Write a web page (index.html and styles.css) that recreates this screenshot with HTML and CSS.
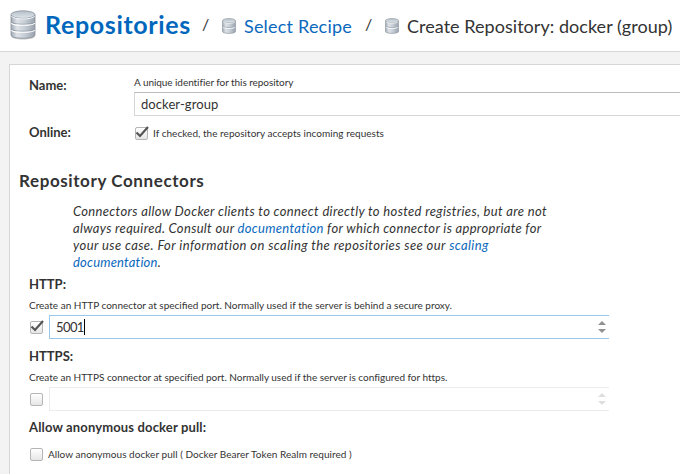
FILE: index.html
```
<!DOCTYPE html>
<html lang="en">
<head>
<meta charset="utf-8">
<title>Create Repository</title>
<link rel="stylesheet" href="styles.css">
</head>
<body>
<svg class="defs" aria-hidden="true">
  <defs>
    <linearGradient id="metal"><stop offset="0" stop-color="#a0a8b2"/><stop offset=".25" stop-color="#dfe3e8"/><stop offset=".55" stop-color="#c8cfd7"/><stop offset="1" stop-color="#98a2ad"/></linearGradient>
    <linearGradient id="lid" x2="0" y2="1"><stop offset="0" stop-color="#b3bdc6"/><stop offset="1" stop-color="#e1e7ec"/></linearGradient>
    <symbol id="database" viewBox="0 0 26 30">
      <path d="M1.500 25v1.500c0 4 23 4 23 0V25z" fill="#555" opacity=".35"/>
      <path d="M1 5v20c0 4.300 24 4.300 24 0V5z" fill="url(#metal)" stroke="#88919b" stroke-width=".8"/>
      <path d="M1.500 12c0 3 23 3 23 0M1.500 19c0 3 23 3 23 0" fill="none" stroke="#8a95a1" stroke-width=".8"/>
      <path d="M1.500 13c0 3 23 3 23 0M1.500 20c0 3 23 3 23 0" fill="none" stroke="#fff" stroke-width="1.200"/>
      <ellipse cx="13" cy="4.600" rx="12" ry="3.800" fill="url(#lid)" stroke="#8c96a0" stroke-width=".8"/>
      <path d="M1.500 6c1 4 22 4 23 0" fill="none" stroke="#f6f8fa" stroke-width="1"/>
    </symbol>
    <symbol id="database-small" viewBox="0 0 14 16">
      <path d="M.5 3v10.500c0 2.500 13 2.500 13 0V3z" fill="url(#metal)" stroke="#99a1aa" stroke-width=".8"/>
      <path d="M1 8c0 2 12 2 12 0" fill="none" stroke="#a0a8b1" stroke-width=".8"/>
      <path d="M1 9c0 2 12 2 12 0" fill="none" stroke="#f8f9fa" stroke-width=".9"/>
      <ellipse cx="7" cy="2.700" rx="6.500" ry="2.200" fill="url(#lid)" stroke="#a0a8b0" stroke-width=".8"/>
      <path d="M1 3.700c1 2.200 11 2.200 12 0" fill="none" stroke="#f8f9fa" stroke-width=".7"/>
    </symbol>
  </defs>
</svg>
<header class="crumbs">
  <svg class="db-large"><use href="#database"/></svg>
  <a class="title">Repositories</a>
  <span class="slash">/</span>
  <svg class="db-small"><use href="#database-small"/></svg>
  <a class="crumb link recipe">Select Recipe</a>
  <span class="slash">/</span>
  <svg class="db-small"><use href="#database-small"/></svg>
  <span class="crumb">Create Repository: docker (group)</span>
</header>
<main class="panel">
  <div class="field name-field">
    <label class="label">Name:</label>
    <div>
      <div class="help name-help">A unique identifier for this repository</div>
      <div class="input name-input"><span>docker-group</span></div>
    </div>
  </div>
  <div class="field online-field">
    <label class="label">Online:</label>
    <div class="check-row">
      <span class="checkbox"><svg class="tick" viewBox="0 0 15 14"><path d="M1.500 6.500 5 10 13 1"/></svg></span>
      <span class="help online-help">If checked, the repository accepts incoming requests</span>
    </div>
  </div>
  <h2 class="section">Repository Connectors</h2>
  <p class="info">
    <span class="line line-first">Connectors allow Docker clients to connect directly to hosted registries, but are not</span>
    <span class="line line-second">always required. Consult our <a class="link">documentation</a> for which connector is appropriate for</span>
    <span class="line line-third">your use case. For information on scaling the repositories see our <a class="link">scaling</a></span>
    <span class="line line-last"><a class="link">documentation</a>.</span>
  </p>
  <section class="connector">
    <div class="label">HTTP:</div>
    <div class="help">Create an HTTP connector at specified port. Normally used if the server is behind a secure proxy.</div>
    <div class="port-row">
      <span class="checkbox"><svg class="tick" viewBox="0 0 15 14"><path d="M1.500 6.500 5 10 13 1"/></svg></span>
      <div class="input port focused"><span class="port-value">5001</span><i class="caret"></i><svg class="spinner" viewBox="0 0 8 12"><path d="M0 4 4 0l4 4zM0 8l4 4 4-4z"/></svg></div>
    </div>
  </section>
  <section class="connector">
    <div class="label">HTTPS:</div>
    <div class="help https-help">Create an HTTPS connector at specified port. Normally used if the server is configured for https.</div>
    <div class="port-row">
      <span class="checkbox"></span>
      <div class="input port disabled"><svg class="spinner" viewBox="0 0 8 12"><path d="M0 4 4 0l4 4zM0 8l4 4 4-4z"/></svg></div>
    </div>
  </section>
  <section class="anonymous">
    <div class="label anonymous-label">Allow anonymous docker pull:</div>
    <div class="check-row">
      <span class="checkbox"></span>
      <span class="help anonymous-help">Allow anonymous docker pull ( Docker Bearer Token Realm required )</span>
    </div>
  </section>
</main>
</body>
</html>
```
FILE: styles.css
```
* { box-sizing: border-box; }
body { margin: 0; width: 680px; height: 474px; overflow: hidden; background: #f3f3f3; color: #333; font-family: Lato, sans-serif; font-size: 13px; white-space: nowrap; }
.defs { position: absolute; width: 0; height: 0; }
.link { color: #0a68bd; }
.crumbs { display: flex; align-items: center; height: 52px; padding-left: 10px; background: #fff; border-bottom: 1px solid #d6d6d6; }
.db-large { width: 26px; height: 30px; flex: none; margin: 0 9px 2px 0; }
.title { width: 157px; padding-bottom: 4px; font-size: 25px; font-weight: 700; letter-spacing: .65px; color: #0067bd; }
.slash { width: 20px; padding-bottom: 4px; font-size: 16px; }
.db-small { width: 14px; height: 16px; flex: none; margin-right: 8px; }
.crumb { font-size: 18px; letter-spacing: .04px; }
.recipe { width: 121px; letter-spacing: .2px; }
.panel { margin: 12px 0 0 9px; height: 420px; width: 690px; background: #fff; border: 1px solid #d6d6d6; padding-left: 19px; }
.label { font-size: 13px; font-weight: 700; line-height: 16px; }
.help { font-size: 10px; line-height: 14px; }
.name-help { letter-spacing: -.06px; }
.online-help { letter-spacing: .04px; }
.https-help { letter-spacing: -.02px; }
.anonymous-help { letter-spacing: .04px; }
.anonymous-label { letter-spacing: .15px; }
.field { display: grid; grid-template-columns: 105px 1fr; }
.name-field { padding-top: 10px; height: 60px; }
.name-field .label { padding-top: 2px; }
.online-field .label { margin-top: -1px; }
.input { display: flex; align-items: center; height: 24px; border: 1px solid #d6d6d6; border-top-color: #bbb; padding-left: 6px; background: #fff; }
.name-input { margin-top: 3px; letter-spacing: .08px; }
.check-row { display: flex; align-items: center; gap: 5px; height: 16px; padding-left: 1px; }
.checkbox { display: block; width: 13px; height: 13px; flex: none; border: 1px solid #b5b5b5; border-radius: 2px; background: linear-gradient(#fff, #e6e6e6); }
.tick { display: block; width: 15px; height: 14px; margin: -2px 0 0 -1px; fill: none; stroke: #555; stroke-width: 2.2; }
.section { margin: 30px 0 0 -10px; font-size: 17px; line-height: 20px; font-weight: 700; letter-spacing: .6px; }
.info { margin: 12px 0 0 44px; font-style: italic; line-height: 17px; }
.line { display: block; width: max-content; }
.line-first { letter-spacing: .34px; }
.line-second { letter-spacing: .32px; }
.line-third { letter-spacing: .41px; }
.line-last { letter-spacing: .2px; }
.connector { height: 72px; padding-top: 5px; }
.connector .help { margin: 6px 0 3px; }
.port-row { display: flex; align-items: center; gap: 6px; padding-left: 1px; }
.port { width: 560px; border-right: 0; padding-right: 3px; }
.port-value { letter-spacing: -.6px; }
.input.focused { border-color: #99c8ef; }
.input.disabled { border-color: #ececec; }
.caret { width: 1px; height: 16px; background: #000; }
.spinner { width: 8px; height: 12px; margin-left: auto; fill: #919191; }
.disabled .spinner { fill: #dedede; }
.anonymous { padding-top: 4px; }
.anonymous .check-row { margin-top: 11px; }
```
